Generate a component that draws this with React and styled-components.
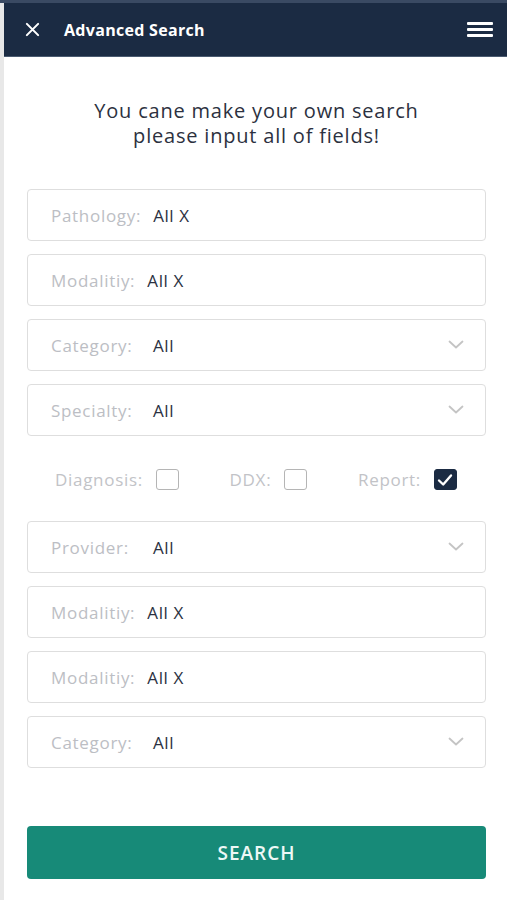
import React from 'react';
import styled, { createGlobalStyle } from 'styled-components';

const GlobalStyle = createGlobalStyle`
  html, body { margin: 0; padding: 0; background: #fff; }
  body { font-family: "Open Sans", "Liberation Sans", sans-serif; }
  * { box-sizing: border-box; }
`;

const fields = [
  { label: 'Pathology:', value: 'All X' },
  { label: 'Modalitiy:', value: 'All X' },
  { label: 'Category:', value: 'All', select: true },
  { label: 'Specialty:', value: 'All', select: true },
];

const moreFields = [
  { label: 'Provider:', value: 'All', select: true },
  { label: 'Modalitiy:', value: 'All X' },
  { label: 'Modalitiy:', value: 'All X' },
  { label: 'Category:', value: 'All', select: true },
];

const checks = [
  { label: 'Diagnosis:', checked: false },
  { label: 'DDX:', checked: false },
  { label: 'Report:', checked: true },
];

const Chevron = () => (
  <svg width="16" height="10" viewBox="0 0 16 10" fill="none">
    <path d="M1.5 1.5 L8 7.5 L14.5 1.5" stroke="#c4c4c4" strokeWidth="1.8" strokeLinecap="round" strokeLinejoin="round" />
  </svg>
);

const Field = ({ label, value, select }) => (
  <FieldBox>
    <Label $select={select}>{label}</Label>
    <Value>{value}</Value>
    {select && <Arrow><Chevron /></Arrow>}
  </FieldBox>
);

const App = () => {
  return (
    <Page>
      <GlobalStyle />
      <TopStrip />
      <Header>
        <CloseIcon viewBox="0 0 16 16">
          <path d="M2 2 L14 14 M14 2 L2 14" stroke="#fff" strokeWidth="2.2" strokeLinecap="round" />
        </CloseIcon>
        <HeaderTitle>Advanced Search</HeaderTitle>
        <Burger>
          <span />
          <span />
          <span />
        </Burger>
      </Header>

      <Content>
        <Intro>
          You cane make your own search
          <br />
          please input all of fields!
        </Intro>

        <FieldList>
          {fields.map((f, i) => <Field key={i} {...f} />)}
        </FieldList>

        <CheckRow>
          {checks.map((c) => (
            <CheckItem key={c.label}>
              <CheckLabel>{c.label}</CheckLabel>
              <Box $checked={c.checked}>
                {c.checked && (
                  <svg width="16" height="14" viewBox="0 0 16 14" fill="none">
                    <path d="M2 7.5 L6.2 11.5 L14 2.5" stroke="#fff" strokeWidth="2.4" strokeLinecap="round" strokeLinejoin="round" />
                  </svg>
                )}
              </Box>
            </CheckItem>
          ))}
        </CheckRow>

        <FieldList>
          {moreFields.map((f, i) => <Field key={i} {...f} />)}
        </FieldList>

        <SearchButton>SEARCH</SearchButton>
      </Content>
    </Page>
  );
};

export default App;

const Page = styled.div`
  min-height: 900px;
  border-left: 4px solid #e8e8e8;
  background: #fff;
`;

const TopStrip = styled.div`
  height: 3px;
  margin-left: -4px;
  background: #3a4a63;
`;

const Header = styled.div`
  height: 54px;
  background: #1b2b43;
  border-bottom: 1px solid #4a5a70;
  display: flex;
  align-items: center;
  padding: 0 14px 0 21px;
`;

const CloseIcon = styled.svg`
  width: 15px;
  height: 15px;
`;

const HeaderTitle = styled.div`
  margin-left: 24px;
  color: #fff;
  font-size: 16px;
  font-weight: 700;
  flex: 1;
  letter-spacing: 0.3px;
`;

const Burger = styled.div`
  width: 26px;
  display: flex;
  flex-direction: column;
  gap: 3.5px;
  span {
    display: block;
    height: 2.5px;
    background: #fff;
    border-radius: 1px;
  }
`;

const Content = styled.div`
  padding: 41px 21px 0 23px;
  display: flex;
  flex-direction: column;
`;

const Intro = styled.div`
  text-align: center;
  color: #2c3140;
  font-size: 20px;
  letter-spacing: 0.8px;
  line-height: 25px;
  margin-bottom: 41px;
`;

const FieldList = styled.div`
  display: flex;
  flex-direction: column;
  gap: 13px;
`;

const FieldBox = styled.div`
  height: 52px;
  border: 1.5px solid #dedede;
  border-radius: 4px;
  display: flex;
  align-items: center;
  padding: 0 21px 0 23px;
  font-size: 17px;
  letter-spacing: 0.7px;
`;

const Label = styled.span`
  color: #bcbec4;
  min-width: ${(p) => (p.$select ? '90px' : '0')};
`;

const Value = styled.span`
  color: #2b3142;
  margin-left: 12px;
  flex: 1;
  letter-spacing: 0.6px;
`;

const Arrow = styled.span`
  display: flex;
  align-items: center;
`;

const CheckRow = styled.div`
  height: 85px;
  display: flex;
  align-items: center;
  justify-content: space-between;
  padding: 2px 29px 0 28px;
`;

const CheckItem = styled.div`
  display: flex;
  align-items: center;
  gap: 13px;
`;

const CheckLabel = styled.span`
  color: #c2c3c7;
  font-size: 17px;
  letter-spacing: 0.7px;
`;

const Box = styled.span`
  width: 23px;
  height: 21px;
  border-radius: 3px;
  display: flex;
  align-items: center;
  justify-content: center;
  border: 1.5px solid ${(p) => (p.$checked ? '#1b2b43' : '#b5b5b5')};
  background: ${(p) => (p.$checked ? '#1b2b43' : '#fff')};
`;

const SearchButton = styled.button`
  margin-top: 58px;
  height: 53px;
  border: none;
  border-radius: 4px;
  background: #178a78;
  color: #eef8f6;
  font-family: "Open Sans", "Liberation Sans", sans-serif;
  font-size: 19px;
  font-weight: 600;
  letter-spacing: 1px;
  cursor: pointer;
`;
